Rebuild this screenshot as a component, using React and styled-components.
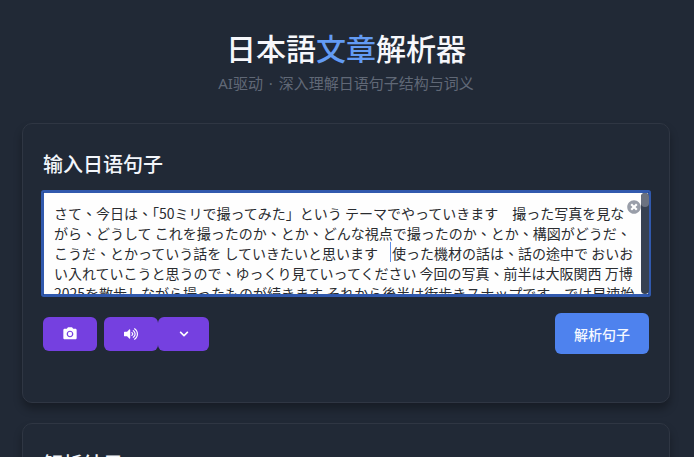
import React from 'react'
import styled, { createGlobalStyle } from 'styled-components'
import { MdCameraAlt } from 'react-icons/md'
import { FaVolumeUp, FaChevronDown, FaTimesCircle } from 'react-icons/fa'

const TEXT = 'さて、今日は、「50ミリで撮ってみた」という テーマでやっていきます　撮った写真を見ながら、どうして これを撮ったのか、とか、どんな視点で撮ったのか、とか、構図がどうだ、こうだ、とかっていう話を していきたいと思います　使った機材の話は、話の途中で おいおい入れていこうと思うので、ゆっくり見ていってください 今回の写真、前半は大阪関西 万博2025を散歩しながら撮ったものが続きます それから後半は街歩きスナップです　では早速始めていきましょう'

const App = () => {
    return (
        <>
            <GlobalStyle/>
            <Page>
                <Header>
                    <Title lang="ja">日本語<span>文章</span>解析器</Title>
                    <Subtitle>AI驱动 <Dot>·</Dot> 深入理解日语句子结构与词义</Subtitle>
                </Header>
                <Card>
                    <CardTitle as="label" htmlFor="sentence">输入日语句子</CardTitle>
                    <Field>
                        <TextArea id="sentence" lang="zh-TW" spellCheck="false" defaultValue={TEXT} />
                        <Caret/>
                        <ClearButton type="button" aria-label="清空">
                            <FaTimesCircle/>
                        </ClearButton>
                        <ScrollTrack><ScrollThumb/></ScrollTrack>
                    </Field>
                    <Toolbar>
                        <Tools>
                            <IconButton type="button" aria-label="上传图片"><MdCameraAlt size={16}/></IconButton>
                            <Split>
                                <IconButton type="button" aria-label="朗读"><FaVolumeUp size={14}/></IconButton>
                                <IconButton type="button" aria-label="朗读选项" $narrow><FaChevronDown size={10}/></IconButton>
                            </Split>
                        </Tools>
                        <Submit type="button">解析句子</Submit>
                    </Toolbar>
                </Card>
                <Card>
                    <CardTitle>解析结果</CardTitle>
                </Card>
            </Page>
        </>
    )
}

export default App

const GlobalStyle = createGlobalStyle`
* {
    box-sizing: border-box;
}

html {
    scrollbar-width: none;
}

body {
    margin: 0;
    background: #212936;
    font-family: 'Noto Sans CJK SC', sans-serif;
}

button, textarea {
    font-family: inherit;
}
`

const Page = styled.main`
    display: flex;
    flex-direction: column;
    gap: 20px;
    padding: 25px 24px 24px 22px;
`

const Header = styled.header`
    text-align: center;
`

const Title = styled.h1`
    margin: 0;
    font-family: 'Noto Sans CJK JP', sans-serif;
    font-size: 30px;
    line-height: 44px;
    font-weight: 500;
    color: #f6f7fb;

    & span {
        color: #639bf3;
    }
`

const Subtitle = styled.p`
    margin: 2px 0 8px;
    font-family: 'Noto Sans', 'Noto Sans CJK SC', sans-serif;
    font-size: 15px;
    line-height: 24px;
    color: #606876;
`

const Dot = styled.span`
    margin: 0 2px;
`

const Card = styled.section`
    padding: 24px 20px 48px;
    border: 1px solid #2f3643;
    border-radius: 10px;
    background: #212936;
    box-shadow: 0 6px 8px rgba(0, 0, 0, 0.3);
`

const CardTitle = styled.h2`
    display: block;
    margin: 0;
    font-size: 20px;
    line-height: 32px;
    font-weight: 500;
    color: #f3f6fb;
`

const Field = styled.div`
    position: relative;
    display: flex;
    margin-top: 12px;
`

const TextArea = styled.textarea`
    flex: 1;
    height: 103px;
    padding: 10px 12px 0 10px;
    border: 1px solid #3159ad;
    border-radius: 1px;
    box-shadow: 0 0 0 2px #3159ad;
    outline: none;
    resize: none;
    background: #fefefe;
    color: #2a2c30;
    font-family: 'Noto Sans CJK TC', sans-serif;
    font-size: 14px;
    line-height: 20px;
    scrollbar-width: none;
`

const Caret = styled.span`
    position: absolute;
    top: 50px;
    left: 347px;
    width: 1px;
    height: 20px;
    background: #5f8fe8;
`

const ClearButton = styled.button`
    position: absolute;
    top: 8px;
    right: 8px;
    display: flex;
    padding: 0;
    border: 0;
    border-radius: 50%;
    background: #fefefe;
    color: #999ea9;
    font-size: 14px;
`

const ScrollTrack = styled.div`
    position: absolute;
    top: 1px;
    right: 0;
    bottom: 1px;
    width: 8px;
    border-radius: 4px;
    background: #374151;
`

const ScrollThumb = styled.div`
    height: 14px;
    border-radius: 4px;
    background: #6b7280;
`

const Toolbar = styled.div`
    display: flex;
    align-items: center;
    justify-content: space-between;
    margin-top: 18px;
`

const Tools = styled.div`
    display: flex;
    gap: 7px;
`

const Split = styled.div`
    display: flex;
`

const IconButton = styled.button`
    display: flex;
    align-items: center;
    justify-content: center;
    width: ${props => props.$narrow ? '51px' : '54px'};
    height: 34px;
    padding: 0;
    border: 0;
    border-radius: 6px;
    background: #7540e0;
    color: #fff;
`

const Submit = styled.button`
    height: 41px;
    padding: 0 19px;
    border: 0;
    border-radius: 6px;
    background: #4e82ee;
    color: #f5f8ff;
    font-size: 14px;
    line-height: 20px;
    font-weight: 500;
`
